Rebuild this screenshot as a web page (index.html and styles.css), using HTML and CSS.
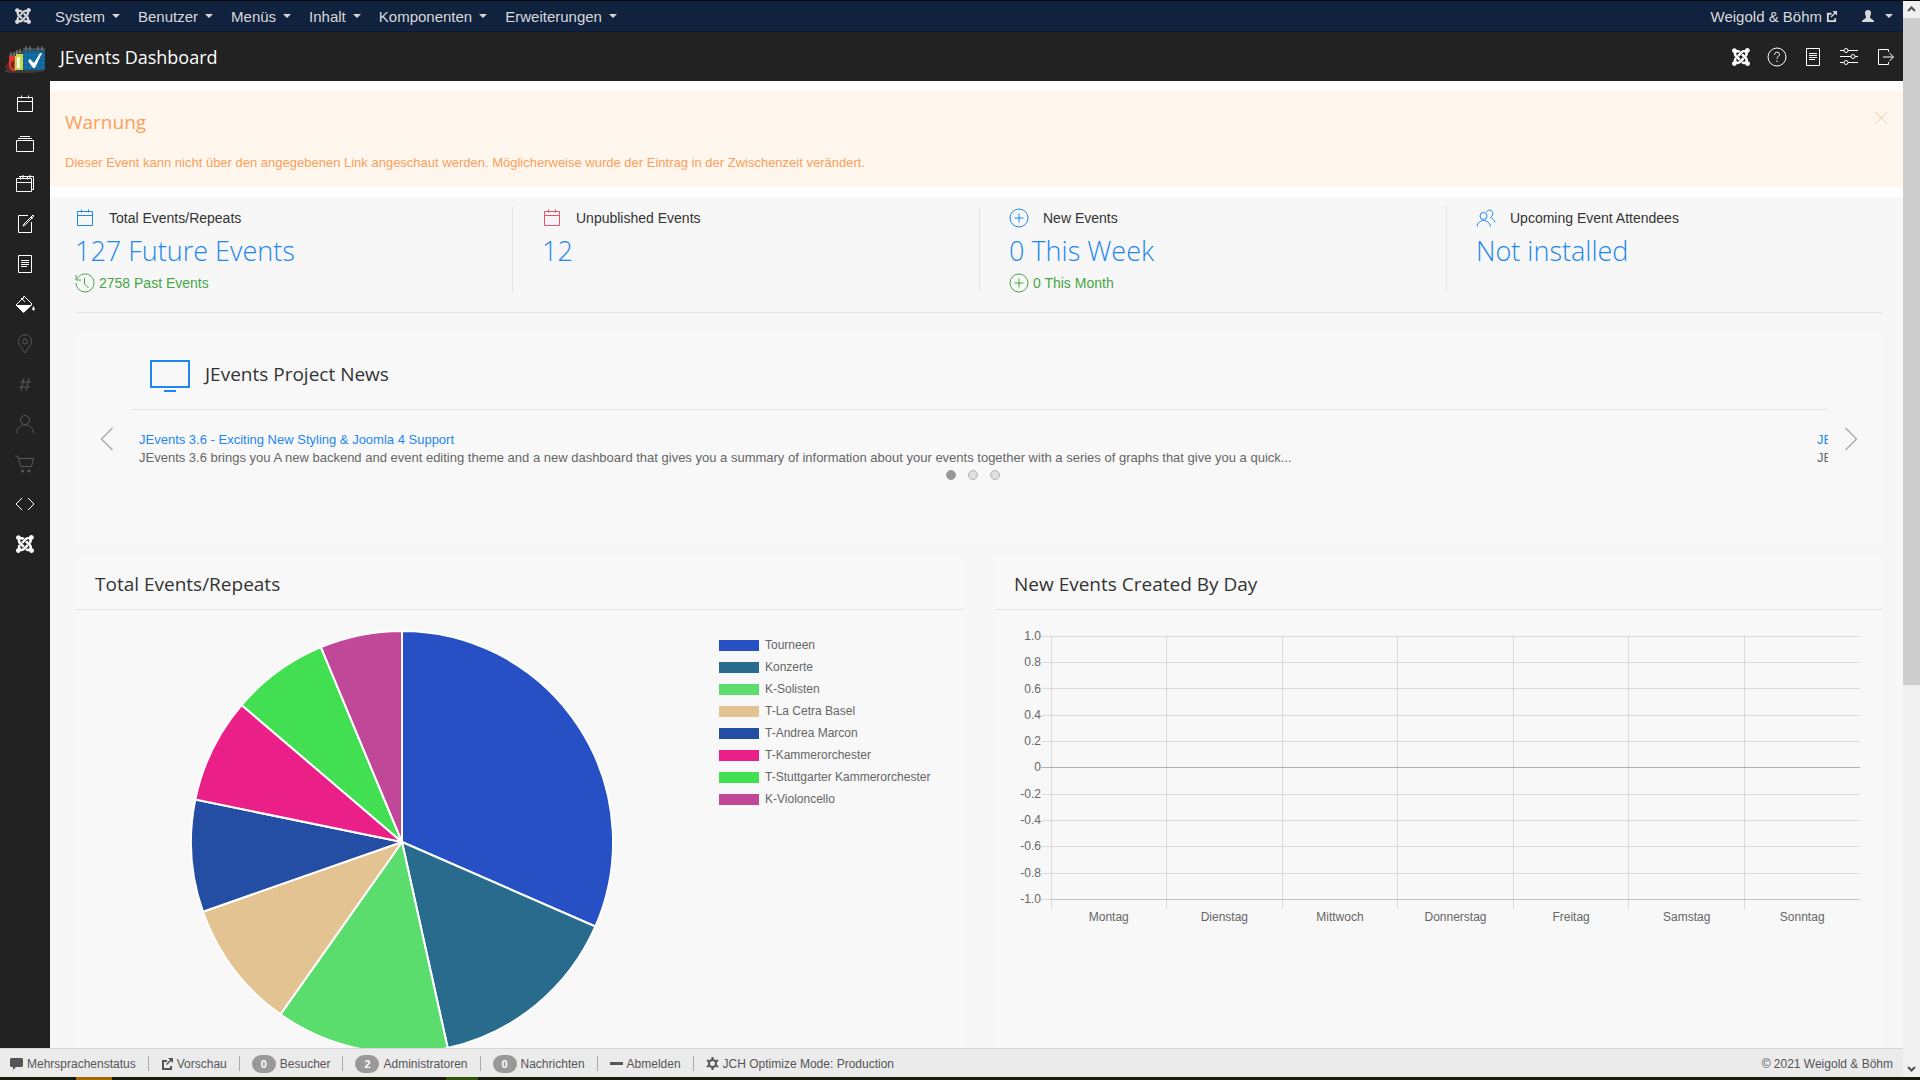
FILE: index.html
```html
<!DOCTYPE html>
<html lang="de">

<head>
    <meta charset="UTF-8" />
    <meta name="viewport" content="width=device-width, initial-scale=1.0" />
    <title>JEvents Dashboard</title>
    <link rel="stylesheet" href="styles.css">
</head>

<body>
    <!-- Shared icon shapes -->
    <svg class="sprite" width="0" height="0" aria-hidden="true">
        <symbol id="joomla" viewBox="0 0 24 24">
            <path fill="currentColor" d="M16.719 14.759L14.22 17.26l-2.37 2.37-.462.466c-1.368 1.365-3.297 1.83-5.047 1.397-.327 1.424-1.604 2.49-3.13 2.49C1.438 23.983 0 22.547 0 20.772c0-1.518 1.055-2.789 2.469-3.123-.446-1.76.016-3.705 1.396-5.08l.179-.18 2.37 2.37-.184.181c-.769.779-.769 2.024 0 2.789.771.78 2.022.78 2.787 0l.465-.465 2.367-2.371 2.502-2.506 2.368 2.372zm.924 6.652c-1.822.563-3.885.12-5.328-1.318l-.18-.185 2.365-2.369.18.184c.771.768 2.018.768 2.787 0 .765-.765.769-2.01-.004-2.781l-.466-.465-2.365-2.37-2.502-2.503 2.37-2.369 2.499 2.505 2.367 2.37.464.464c1.365 1.36 1.846 3.278 1.411 5.021 1.56.224 2.759 1.56 2.759 3.18 0 1.784-1.439 3.21-3.209 3.21-1.545 0-2.851-1.096-3.135-2.565zM6.975 9.461L9.508 6.93l2.37-2.37.462-.462c1.359-1.365 3.315-1.845 5.065-1.395C17.621 1.154 18.96-.021 20.576 0c1.772.021 3.21 1.475 3.196 3.247-.012 1.621-1.205 2.953-2.76 3.173.436 1.771-.027 3.716-1.396 5.084l-.18.181-2.385-2.369.184-.184c.769-.77.769-2.019 0-2.784-.764-.769-2.01-.769-2.779-.004l-.465.464-2.37 2.37L9.09 11.675 6.975 9.461zM6.3 2.664c1.74-.435 3.674.03 5.049 1.4l.18.18-2.37 2.37-.18-.18c-.765-.77-2.025-.77-2.789-.004-.766.768-.766 2.022 0 2.787l.465.465 2.37 2.37 2.5 2.504-2.37 2.37-2.5-2.505-2.367-2.37-.466-.466C2.471 10.229 2.01 8.279 2.487 6.534 1.076 6.198.018 4.929.018 3.414.018 1.644 1.455.204 3.228.204c1.52 0 2.79 1.05 3.124 2.46z" />
        </symbol>
        <symbol id="calendar" viewBox="0 0 20 20">
            <path d="M2.5 3.5h15v14h-15zM2.5 7.5h15M6.5 1.500v3M13.500 1.500v3" />
        </symbol>
        <symbol id="plus-circle" viewBox="0 0 20 20">
            <circle cx="10" cy="10" r="9" />
            <path d="M10 5.500v9M5.500 10h9" />
        </symbol>
        <symbol id="file-text" viewBox="0 0 20 20">
            <path d="M3.500 1.500h13v17h-13zM6 6.500h8M6 8.500h8M6 10.500h8M6 12.500h6" />
        </symbol>
        <symbol id="external" viewBox="0 0 12 12">
            <path class="solid" d="M1 2h5v2H3v6h6V8h2v4H1zM7 0h5v5l-2-2-4 4-1-1 4-4z" />
        </symbol>
    </svg>

    <div class="window">
        <div class="page">
            <nav class="navbar">
                <a href="#" class="brand" aria-label="Joomla"><svg width="16" height="16"><use href="#joomla" /></svg></a>
                <a href="#" class="nav-item">System</a>
                <a href="#" class="nav-item">Benutzer</a>
                <a href="#" class="nav-item">Menüs</a>
                <a href="#" class="nav-item">Inhalt</a>
                <a href="#" class="nav-item">Komponenten</a>
                <a href="#" class="nav-item">Erweiterungen</a>
                <a href="#" class="site-link">Weigold &amp; Böhm <svg width="11" height="11"><use href="#external" /></svg></a>
                <a href="#" class="nav-item user" aria-label="Benutzermenü"><svg width="14" height="14" viewBox="0 0 14 14"><path class="solid" d="M7 1c2 0 3 1 3 3s-1 3-1 4c0 2 4 2 4 5H1c0-3 4-3 4-5 0-1-1-2-1-4s1-3 3-3z" /></svg></a>
            </nav>

            <header class="header">
                <svg class="logo" width="42" height="28" viewBox="0 0 42 28">
                    <path d="M1 24l39-1v2l-12 2H8l-7-1z" fill="#3c3c3c" />
                    <path d="M1 21l3-5 3-3 2 12-6-1z" fill="#5b2a27" />
                    <path d="M5 10h7v15H8l-3-4z" fill="#e23a2c" />
                    <path d="M7 17l3-3v9l-3-2z" fill="#6b2c28" />
                    <path d="M11 8h8v16h-8z" fill="#c5d94a" />
                    <path d="M13 11h3v11h-3z" fill="#f4f3d8" />
                    <path d="M5 10h7V8H5zM11 8h8V5h-8z" fill="#444" />
                    <path d="M7 6v4M10 6v4M13 4v4M16 3v4" stroke="#999" />
                    <path d="M19 3h22v21H19z" fill="#0d5f93" />
                    <path d="M19 2h22v3H19z" fill="#444c50" />
                    <path d="M22 6v18M26 6v18M30 6v18M34 6v18M38 6v18M19 9h22M19 13h22M19 17h22M19 21h22" stroke="#1d78ad" />
                    <path d="M22 0v4M26 0v4M34 0v4M38 0v4" stroke="#8a8a8a" />
                    <path d="M24 15l2-2 4 4 6-10h2l-7 15h-2z" fill="#fff" />
                </svg>
                <h1>JEvents Dashboard</h1>
                <div class="tools">
                    <a href="#" aria-label="JEvents"><svg width="18" height="18"><use href="#joomla" /></svg></a>
                    <a href="#" aria-label="Hilfe"><svg width="20" height="20" viewBox="0 0 20 20"><circle cx="10" cy="10" r="9" /><path d="M7.500 7.800c0-3.500 5-3.300 5-.5 0 2-2.500 2-2.500 4.500M10 13.500v1.500" /></svg></a>
                    <a href="#" aria-label="Dokumentation"><svg width="20" height="20"><use href="#file-text" /></svg></a>
                    <a href="#" aria-label="Einstellungen"><svg width="20" height="20" viewBox="0 0 20 20"><circle cx="7" cy="3.500" r="2" /><circle cx="14" cy="9.500" r="2" /><circle cx="7" cy="15.500" r="2" /><path d="M1 3.500h4M9 3.500h10M1 9.500h11M16 9.500h3M1 15.500h4M9 15.500h10" /></svg></a>
                    <a href="#" aria-label="Abmelden"><svg width="20" height="20" viewBox="0 0 20 20"><path d="M13.500 5V2.500h-10v15h10V15M8 10h10M14.500 6l4 4-4 4" /></svg></a>
                </div>
            </header>

            <div class="workspace">
                <aside class="sidebar">
                    <a href="#" aria-label="Kalender"><svg width="20" height="20"><use href="#calendar" /></svg></a>
                    <a href="#" aria-label="Kategorien"><svg width="20" height="20" viewBox="0 0 20 20"><path d="M1.500 6.500h17v11h-17zM3 4.500h14M5 2.500h10" /></svg></a>
                    <a href="#" aria-label="Termine"><svg width="20" height="20" viewBox="0 0 20 20"><path d="M1.500 4.500h15v13h-15zM1.500 8.500h15M5.500 2.500v3M12.500 2.500v3M4 2.500h14.500v13H17M8 1v3M15 1v3" /></svg></a>
                    <a href="#" aria-label="Bearbeiten"><svg width="20" height="20" viewBox="0 0 20 20"><path d="M13 1.500H3.500v17h13V8M18 1l1 1-9 9-2 1 1-2 9-9zM16 3l1.500 1.500" /></svg></a>
                    <a href="#" aria-label="Layouts"><svg width="20" height="20"><use href="#file-text" /></svg></a>
                    <a href="#" aria-label="Farben"><svg width="20" height="20" viewBox="0 0 20 20"><path d="M8 5l1-3 8 8-9 8-7-7 8-8M6 4l4 4" /><path class="solid" d="M1 11h16l-8.500 8zM18.500 12l1.500 3-1.500 2-1.500-2z" /></svg></a>
                    <a href="#" class="off" aria-label="Orte"><svg width="20" height="20" viewBox="0 0 20 20"><circle cx="10" cy="7.500" r="2.500" /><path d="M10 19C7 14 3.500 11 3.500 7.500c0-9 13-9 13 0C16.500 11 13 14 10 19z" /></svg></a>
                    <a href="#" class="off" aria-label="Tags"><svg width="20" height="20" viewBox="0 0 20 20"><path d="M9 4L6 17M14 4l-3 13M5 8h11M4 13h11" /></svg></a>
                    <a href="#" class="off" aria-label="Teilnehmer"><svg width="20" height="20" viewBox="0 0 20 20"><circle cx="10" cy="6" r="4.500" /><path d="M1.500 19c1-11 16-11 17 0" /></svg></a>
                    <a href="#" class="off" aria-label="Warenkorb"><svg width="20" height="20" viewBox="0 0 20 20"><path d="M0 2h2.500L6 12.500h10.500l2-8H4" /><circle class="solid" cx="7.500" cy="17" r="1.500" /><circle class="solid" cx="14" cy="17" r="1.500" /></svg></a>
                    <a href="#" aria-label="Code"><svg width="20" height="20" viewBox="0 0 20 20"><path d="M7 4l-6 6 6 6M13 4l6 6-6 6" /></svg></a>
                    <a href="#" aria-label="Joomla"><svg width="18" height="18"><use href="#joomla" /></svg></a>
                </aside>

                <main class="content">
                    <section class="alert">
                        <h2>Warnung</h2>
                        <p>Dieser Event kann nicht über den angegebenen Link angeschaut werden. Möglicherweise wurde der Eintrag in der Zwischenzeit verändert.</p>
                        <button class="close" aria-label="Schließen"><svg width="14" height="14" viewBox="0 0 14 14"><path d="M1 1l12 12M13 1L1 13" /></svg></button>
                    </section>

                    <div class="dashboard">
                        <section class="stats">
                            <div class="stat">
                                <h3><svg class="blue" width="20" height="20"><use href="#calendar" /></svg>Total Events/Repeats</h3>
                                <p class="figure">127 Future Events</p>
                                <p class="detail"><svg width="20" height="20" viewBox="0 0 20 20"><path d="M1 2v5h5M2 6c5-9 17-5 17 4a9 9 0 0 1-18 0M9.500 5v6l4 4" /></svg>2758 Past Events</p>
                            </div>
                            <div class="stat">
                                <h3><svg class="red" width="20" height="20"><use href="#calendar" /></svg>Unpublished Events</h3>
                                <p class="figure">12</p>
                            </div>
                            <div class="stat">
                                <h3><svg class="blue" width="20" height="20"><use href="#plus-circle" /></svg>New Events</h3>
                                <p class="figure">0 This Week</p>
                                <p class="detail"><svg width="20" height="20"><use href="#plus-circle" /></svg>0 This Month</p>
                            </div>
                            <div class="stat">
                                <h3><svg class="blue" width="20" height="20" viewBox="0 0 20 20"><circle cx="7.500" cy="8" r="3.500" /><path d="M1 18.500c1-8 12-8 13.500 0M10.500 4c2-4 8-1 6 3-.5 1-1 1.500-2 2.500 2.500 1 4 3 4.500 5" /></svg>Upcoming Event Attendees</h3>
                                <p class="figure">Not installed</p>
                            </div>
                        </section>

                        <hr>

                        <section class="card news">
                            <button class="arrow" aria-label="Zurück"><svg width="14" height="24" viewBox="0 0 14 24"><path d="M12.500 1L1.500 12l11 11" /></svg></button>
                            <div class="news-main">
                                <h2><svg class="blue" width="40" height="40" viewBox="0 0 20 20"><path d="M.5 3.500h19v13H.5zM7 18.500h6" /></svg>JEvents Project News</h2>
                                <div class="slides">
                                    <article class="slide">
                                        <a href="#">JEvents 3.6 - Exciting New Styling &amp; Joomla 4 Support</a>
                                        <p>JEvents 3.6 brings you A new backend and event editing theme and a new dashboard that gives you a summary of information about your events together with a series of graphs that give you a quick...</p>
                                    </article>
                                    <article class="slide">
                                        <a href="#">JEvents</a>
                                        <p>JEvents</p>
                                    </article>
                                </div>
                                <div class="dots">
                                    <button class="dot active" aria-label="1"></button>
                                    <button class="dot" aria-label="2"></button>
                                    <button class="dot" aria-label="3"></button>
                                </div>
                            </div>
                            <button class="arrow" aria-label="Weiter"><svg width="14" height="24" viewBox="0 0 14 24"><path d="M1.500 1l11 11-11 11" /></svg></button>
                        </section>

                        <div class="charts">
                            <section class="card">
                                <h2 class="card-title">Total Events/Repeats</h2>
                                <div class="pie-body">
                                    <div class="pie">
                                        <svg width="424" height="424" viewBox="-1 -1 424 424">
                                            <path fill="#2650c4" d="M211 211V0A211 211 0 0 1 404.400 295.500z" />
                                            <path fill="#286b8d" d="M211 211L404.400 295.500A211 211 0 0 1 256.700 417z" />
                                            <path fill="#5bdd6e" d="M211 211L256.700 417A211 211 0 0 1 89.400 383.400z" />
                                            <path fill="#e3c391" d="M211 211L89.400 383.400A211 211 0 0 1 11.900 280.700z" />
                                            <path fill="#234ea3" d="M211 211L11.900 280.700A211 211 0 0 1 4.300 168.600z" />
                                            <path fill="#ea1f88" d="M211 211L4.300 168.600A211 211 0 0 1 50.600 74z" />
                                            <path fill="#42df52" d="M211 211L50.600 74A211 211 0 0 1 129.900 16.200z" />
                                            <path fill="#c14799" d="M211 211L129.900 16.200A211 211 0 0 1 211 0z" />
                                        </svg>
                                    </div>
                                    <ul class="legend">
                                        <li><i style="background: #2650c4"></i>Tourneen</li>
                                        <li><i style="background: #286b8d"></i>Konzerte</li>
                                        <li><i style="background: #5bdd6e"></i>K-Solisten</li>
                                        <li><i style="background: #e3c391"></i>T-La Cetra Basel</li>
                                        <li><i style="background: #234ea3"></i>T-Andrea Marcon</li>
                                        <li><i style="background: #ea1f88"></i>T-Kammerorchester</li>
                                        <li><i style="background: #42df52"></i>T-Stuttgarter Kammerorchester</li>
                                        <li><i style="background: #c14799"></i>K-Violoncello</li>
                                    </ul>
                                </div>
                            </section>

                            <section class="card">
                                <h2 class="card-title">New Events Created By Day</h2>
                                <div class="bar-body">
                                    <ul class="y-axis">
                                        <li>1.0</li>
                                        <li>0.8</li>
                                        <li>0.6</li>
                                        <li>0.4</li>
                                        <li>0.2</li>
                                        <li>0</li>
                                        <li>-0.2</li>
                                        <li>-0.4</li>
                                        <li>-0.6</li>
                                        <li>-0.8</li>
                                        <li>-1.0</li>
                                    </ul>
                                    <div class="plot">
                                        <svg id="grid" width="100%" height="274"></svg>
                                        <ul class="x-axis">
                                            <li>Montag</li>
                                            <li>Dienstag</li>
                                            <li>Mittwoch</li>
                                            <li>Donnerstag</li>
                                            <li>Freitag</li>
                                            <li>Samstag</li>
                                            <li>Sonntag</li>
                                        </ul>
                                    </div>
                                </div>
                            </section>
                        </div>
                    </div>
                </main>
            </div>

            <footer class="status">
                <a href="#"><svg width="13" height="12" viewBox="0 0 13 12"><path class="solid" d="M1 0h11l1 1v7l-1 1H6l-3 3V9H1L0 8V1z" /></svg>Mehrsprachenstatus</a>
                <a href="#"><svg width="12" height="12"><use href="#external" /></svg>Vorschau</a>
                <span><b class="badge">0</b>Besucher</span>
                <span><b class="badge">2</b>Administratoren</span>
                <a href="#"><b class="badge">0</b>Nachrichten</a>
                <a href="#"><svg width="13" height="12" viewBox="0 0 13 12"><path class="solid" d="M0 4h13v3H0z" /></svg>Abmelden</a>
                <a href="#"><svg width="13" height="13" viewBox="0 0 13 13"><circle class="cog" cx="6.500" cy="6.500" r="3.500" /><path class="cog" d="M6.500 0v3M6.500 10v3M1 3l2.500 2M12 3L9.500 5M1 10l2.500-2M12 10L9.500 8" /></svg>JCH Optimize Mode: Production</a>
                <p>© 2021 Weigold &amp; Böhm</p>
            </footer>
        </div>

        <div class="scrollbar">
            <svg width="17" height="17" viewBox="0 0 17 17"><path d="M5 10l3.500-3.500L12 10" /></svg>
            <div class="thumb"></div>
            <svg width="17" height="17" viewBox="0 0 17 17"><path d="M5 7l3.500 3.500L12 7" /></svg>
        </div>
    </div>
    <div class="taskbar"></div>

    <script>
        // Draws the empty bar chart grid: 11 value lines and 7 day lines
        var rows = [0, 26, 52, 79, 105, 131, 158, 184, 210, 237, 263];
        var lines = "";

        for (var i = 0; i < rows.length; i++) {
            var cls = i == 5 ? ' class="zero"' : "";
            lines += '<line' + cls + ' x1="-10" x2="100%" y1="' + (rows[i] + 0.5) + '" y2="' + (rows[i] + 0.5) + '" />';
        }
        for (var d = 0; d < 7; d++) {
            var x = (d * 100 / 7) + "%";
            lines += '<line x1="' + x + '" x2="' + x + '" y1="0" y2="273" />';
        }
        // The bottom value line is also the axis border
        lines += '<line x1="0" x2="100%" y1="263.5" y2="263.5" />';
        document.getElementById("grid").innerHTML = lines;
    </script>
</body>

</html>
```

FILE: styles.css
```css
* {
    box-sizing: border-box;
}

body {
    margin: 0;
    height: 100vh;
    display: flex;
    flex-direction: column;
    border-top: 1px solid #0a0a0a;
    overflow: hidden;
    font-family: "Liberation Sans", Arial, sans-serif;
    font-size: 13px;
    color: #666;
    background-color: #fff;
}

h1,
h2,
h3,
p,
ul {
    margin: 0;
    padding: 0;
    font-weight: normal;
}

ul {
    list-style: none;
}

a {
    color: inherit;
    text-decoration: none;
}

button {
    padding: 0;
    border: none;
    background: none;
    color: inherit;
    cursor: pointer;
}

hr {
    margin: 20px 0;
    border: none;
    border-top: 1px solid #e5e5e5;
}

svg {
    display: block;
    flex: none;
    fill: none;
    stroke: currentColor;
}

.sprite {
    position: absolute;
}

#joomla path,
.solid {
    fill: currentColor;
    stroke: none;
}

.blue {
    color: #1e87f0;
}

.red {
    color: #f0506e;
}

.window {
    flex: 1;
    min-height: 0;
    display: flex;
}

.page {
    flex: 1;
    min-width: 0;
    display: flex;
    flex-direction: column;
}

/* Top menu */
.navbar {
    height: 31px;
    flex: none;
    display: flex;
    align-items: center;
    gap: 18px;
    padding: 0 10px 0 15px;
    border-bottom: 1px solid #0b1a31;
    background-color: #10223e;
    color: #d9d9d9;
    font-size: 15px;
}

.brand {
    margin-right: 6px;
}

.nav-item {
    display: flex;
    align-items: center;
    gap: 7px;
}

.nav-item::after {
    content: "";
    border: 4px solid transparent;
    border-top-color: currentColor;
    border-bottom: none;
}

.site-link {
    display: flex;
    align-items: center;
    gap: 4px;
    margin-left: auto;
}

.user {
    gap: 10px;
    margin-left: 6px;
}

/* Title bar */
.header {
    height: 49px;
    flex: none;
    display: flex;
    align-items: center;
    padding: 0 0 0 4px;
    background-color: #222;
    color: #fff;
}

.logo {
    margin-top: 6px;
    stroke: none;
}

.header h1 {
    margin-left: 14px;
    font: 18px "Open Sans", "Noto Sans", sans-serif;
}

.tools {
    display: flex;
    margin-left: auto;
}

.tools a {
    width: 36px;
    display: flex;
    justify-content: center;
    align-items: center;
}

.workspace {
    flex: 1;
    min-height: 0;
    display: flex;
}

.sidebar {
    width: 50px;
    flex: none;
    padding-top: 3px;
    background-color: #222;
    color: #fff;
}

.sidebar a {
    height: 40px;
    display: flex;
    align-items: center;
    justify-content: center;
}

.sidebar .off {
    color: #5a5a5a;
}

.content {
    flex: 1;
    min-width: 0;
    display: flex;
    flex-direction: column;
    padding-top: 10px;
    overflow: hidden;
}

/* Warning */
.alert {
    position: relative;
    flex: none;
    height: 96px;
    padding: 17px 15px;
    margin-bottom: 10px;
    background-color: #fff6ee;
    color: #faa05a;
}

.alert h2 {
    margin-bottom: 17px;
    font: 19px/28px "Open Sans", "Noto Sans", sans-serif;
}

.alert p {
    line-height: 20px;
}

.close {
    position: absolute;
    top: 20px;
    right: 15px;
    opacity: 0.5;
}

.dashboard {
    flex: none;
    padding: 10px 20px 40px 25px;
    background-color: #f7f7f7;
}

/* Key figures */
.stats {
    display: grid;
    grid-template-columns: repeat(4, 1fr);
    margin: 0 -30px;
}

.stat {
    height: 85px;
    padding-left: 29px;
    border-left: 1px solid #e5e5e5;
}

.stat:first-child {
    border-left-color: transparent;
}

.stat h3 {
    display: flex;
    align-items: center;
    gap: 14px;
    height: 22px;
    font-size: 14px;
    color: #333;
}

.figure {
    font: 300 27px/44px "Open Sans", "Noto Sans", sans-serif;
    color: #1e87f0;
}

.detail {
    display: flex;
    align-items: center;
    gap: 4px;
    font-size: 14px;
    line-height: 18px;
    color: #46a546;
}

/* News slider */
.card {
    min-width: 0;
    background-color: #f8f8f8;
}

.news {
    display: flex;
    height: 212px;
    margin-bottom: 10px;
    padding: 0 25px;
}

.arrow {
    align-self: flex-start;
    flex: none;
    margin-top: 94px;
    color: #aaa;
}

.arrow path {
    stroke-width: 1.4;
}

.news-main {
    flex: 1;
    min-width: 0;
    margin: 0 16px;
}

.news-main h2 {
    display: flex;
    align-items: center;
    gap: 15px;
    height: 77px;
    padding: 6px 0 0 20px;
    border-bottom: 1px solid #e5e5e5;
    font: 19px "Open Sans", "Noto Sans", sans-serif;
    color: #333;
}

.slides {
    display: flex;
    height: 60px;
    padding-top: 21px;
    overflow: hidden;
    line-height: 18px;
}

.slide {
    flex: 0 0 calc(100% - 20px);
    padding-left: 9px;
}

.slide a {
    color: #1e87f0;
}

.slide p {
    white-space: nowrap;
}

.dots {
    display: flex;
    justify-content: center;
    gap: 12px;
    padding-right: 12px;
}

.dot {
    width: 10px;
    height: 10px;
    border: 1px solid #b2b2b2;
    border-radius: 50%;
    background-color: #e0e0e0;
}

.dot.active {
    border-color: #999;
    background-color: #999;
}

/* Charts */
.charts {
    display: grid;
    grid-template-columns: 1fr 1fr;
    gap: 30px;
}

.card-title {
    height: 55px;
    padding: 0 20px;
    border-bottom: 1px solid #e5e5e5;
    font: 19px/58px "Open Sans", "Noto Sans", sans-serif;
    color: #333;
}

.pie-body {
    display: flex;
    padding: 20px;
    font-size: 12px;
}

.pie {
    flex: 1;
    display: flex;
    justify-content: center;
    padding-right: 11px;
}

.pie svg {
    stroke: #fff;
    stroke-width: 2;
    stroke-linejoin: round;
}

.legend {
    width: 225px;
    padding-top: 4px;
    line-height: 22px;
    white-space: nowrap;
}

.legend li {
    display: flex;
    align-items: center;
    gap: 6px;
}

.legend i {
    width: 40px;
    height: 11px;
}

.bar-body {
    display: flex;
    gap: 10px;
    padding: 19px 23px 20px 20px;
    font-size: 12px;
}

.y-axis {
    width: 27px;
    height: 277px;
    display: flex;
    flex-direction: column;
    justify-content: space-between;
    line-height: 14px;
    text-align: right;
}

.plot {
    flex: 1;
    min-width: 0;
    padding-top: 7px;
}

.plot svg {
    overflow: visible;
    stroke: rgba(0, 0, 0, 0.11);
    shape-rendering: crispEdges;
}

.plot .zero {
    stroke: rgba(0, 0, 0, 0.28);
}

.x-axis {
    display: grid;
    grid-template-columns: repeat(7, 1fr);
    line-height: 14px;
    text-align: center;
}

/* Status bar */
.status {
    height: 29px;
    flex: none;
    display: flex;
    align-items: center;
    padding: 1px 10px 0;
    border-top: 1px solid #d6d6d6;
    background-color: #ebebeb;
    color: #555;
    font-size: 12px;
}

.status a,
.status span {
    display: flex;
    align-items: center;
    gap: 4px;
    height: 15px;
    margin-right: 12px;
    padding-right: 12px;
    border-right: 1px solid #aaa;
}

.status a:last-of-type {
    border-right: none;
}

.badge {
    min-width: 24px;
    padding: 0 8px;
    border-radius: 9px;
    background-color: #999;
    color: #fff;
    font-size: 11px;
    line-height: 18px;
    text-align: center;
}

.cog {
    stroke-width: 2;
}

.status p {
    margin-left: auto;
}

/* Scroll bar */
.scrollbar {
    width: 17px;
    flex: none;
    display: flex;
    flex-direction: column;
    justify-content: space-between;
    background-color: #f0f0f0;
    color: #505050;
}

.scrollbar path {
    stroke-width: 2;
}

.thumb {
    height: 62%;
    margin-bottom: auto;
    background-color: #cdcdcd;
}

.taskbar {
    height: 3px;
    flex: none;
    background: linear-gradient(90deg, #161d08 0 76px, #a86400 76px 112px, #161d08 112px 446px, #315408 446px 478px, #161d08 478px);
}
```
